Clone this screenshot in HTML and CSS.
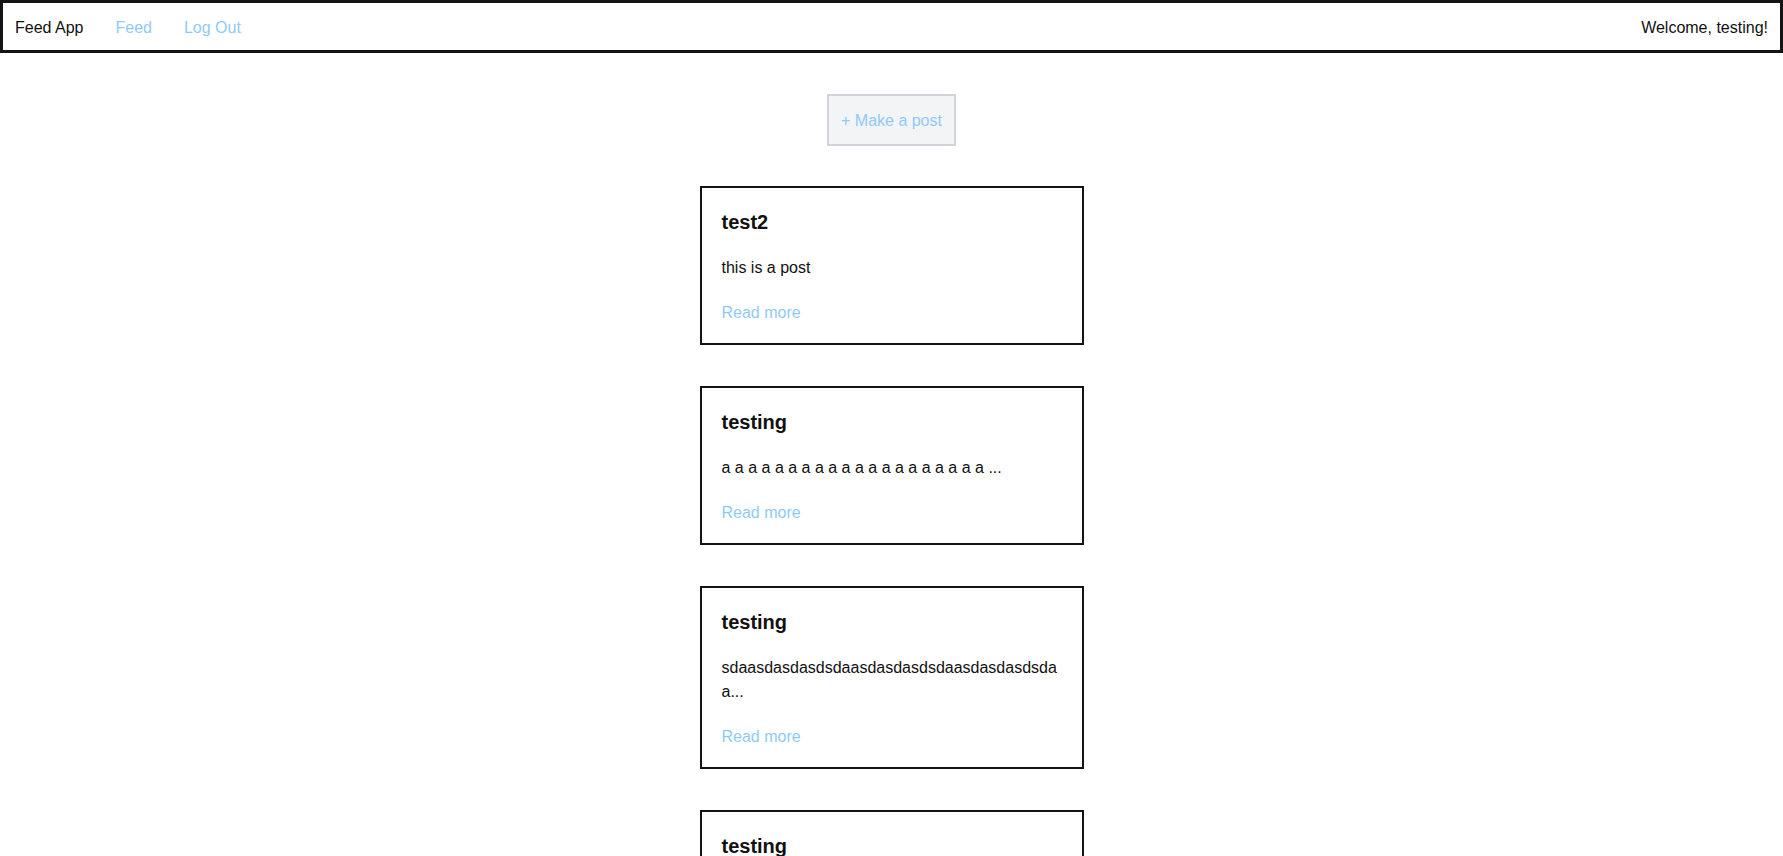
FILE: index.html
```html
<!DOCTYPE html>
<html lang="en">
<head>
<meta charset="utf-8">
<title>Feed App</title>
<link rel="stylesheet" href="styles.css">
</head>
<body>
<nav class="navbar">
  <div class="nav-left">
    <span class="brand">Feed App</span>
    <a class="nav-link" href="#">Feed</a>
    <a class="nav-link" href="#">Log Out</a>
  </div>
  <span class="welcome">Welcome, testing!</span>
</nav>
<main class="feed">
  <a class="make-post" href="#">+ Make a post</a>
  <article class="card">
    <h2 class="card-title">test2</h2>
    <p class="card-body">this is a post</p>
    <a class="read-more" href="#">Read more</a>
  </article>
  <article class="card">
    <h2 class="card-title">testing</h2>
    <p class="card-body">a a a a a a a a a a a a a a a a a a a a ...</p>
    <a class="read-more" href="#">Read more</a>
  </article>
  <article class="card">
    <h2 class="card-title">testing</h2>
    <p class="card-body">sdaasdasdasdsdaasdasdasdsdaasdasdasdsdaa...</p>
    <a class="read-more" href="#">Read more</a>
  </article>
  <article class="card">
    <h2 class="card-title">testing</h2>
    <p class="card-body">this is a post</p>
    <a class="read-more" href="#">Read more</a>
  </article>
</main>
</body>
</html>
```
FILE: styles.css
```css
* { box-sizing: border-box; }
html, body {
  margin: 0;
  padding: 0;
  background: #ffffff;
}
body {
  font-family: "Liberation Sans", Arial, sans-serif;
  font-size: 16px;
  line-height: 24px;
  color: #111111;
}
a { text-decoration: none; color: #90caf9; }

.navbar {
  display: flex;
  justify-content: space-between;
  align-items: center;
  border: 3px solid #141414;
  padding: 13px 12px 10px;
  height: 53px;
}
.nav-left {
  display: flex;
  align-items: center;
  gap: 32px;
}
.brand, .welcome { color: #111111; }

.feed {
  display: flex;
  flex-direction: column;
  align-items: center;
  padding-top: 41px;
  gap: 40px;
  padding-bottom: 40px;
}
.make-post {
  display: block;
  background: #f3f4f6;
  border: 2px solid #d1d5db;
  padding: 13px 12.5px 11px;
  color: #90caf9;
}
.card {
  width: 384px;
  border: 2px solid #141414;
  padding: 22px 20px 18px;
  display: flex;
  flex-direction: column;
  word-break: break-all;
}
.card + .card { margin-top: 1px; }
.card-title {
  margin: 0 0 22px;
  font-size: 20px;
  line-height: 24px;
  font-weight: bold;
  color: #111111;
}
.card-body {
  margin: 0 0 21px;
  color: #111111;
}
.read-more {
  align-self: flex-start;
  color: #90caf9;
}
```
